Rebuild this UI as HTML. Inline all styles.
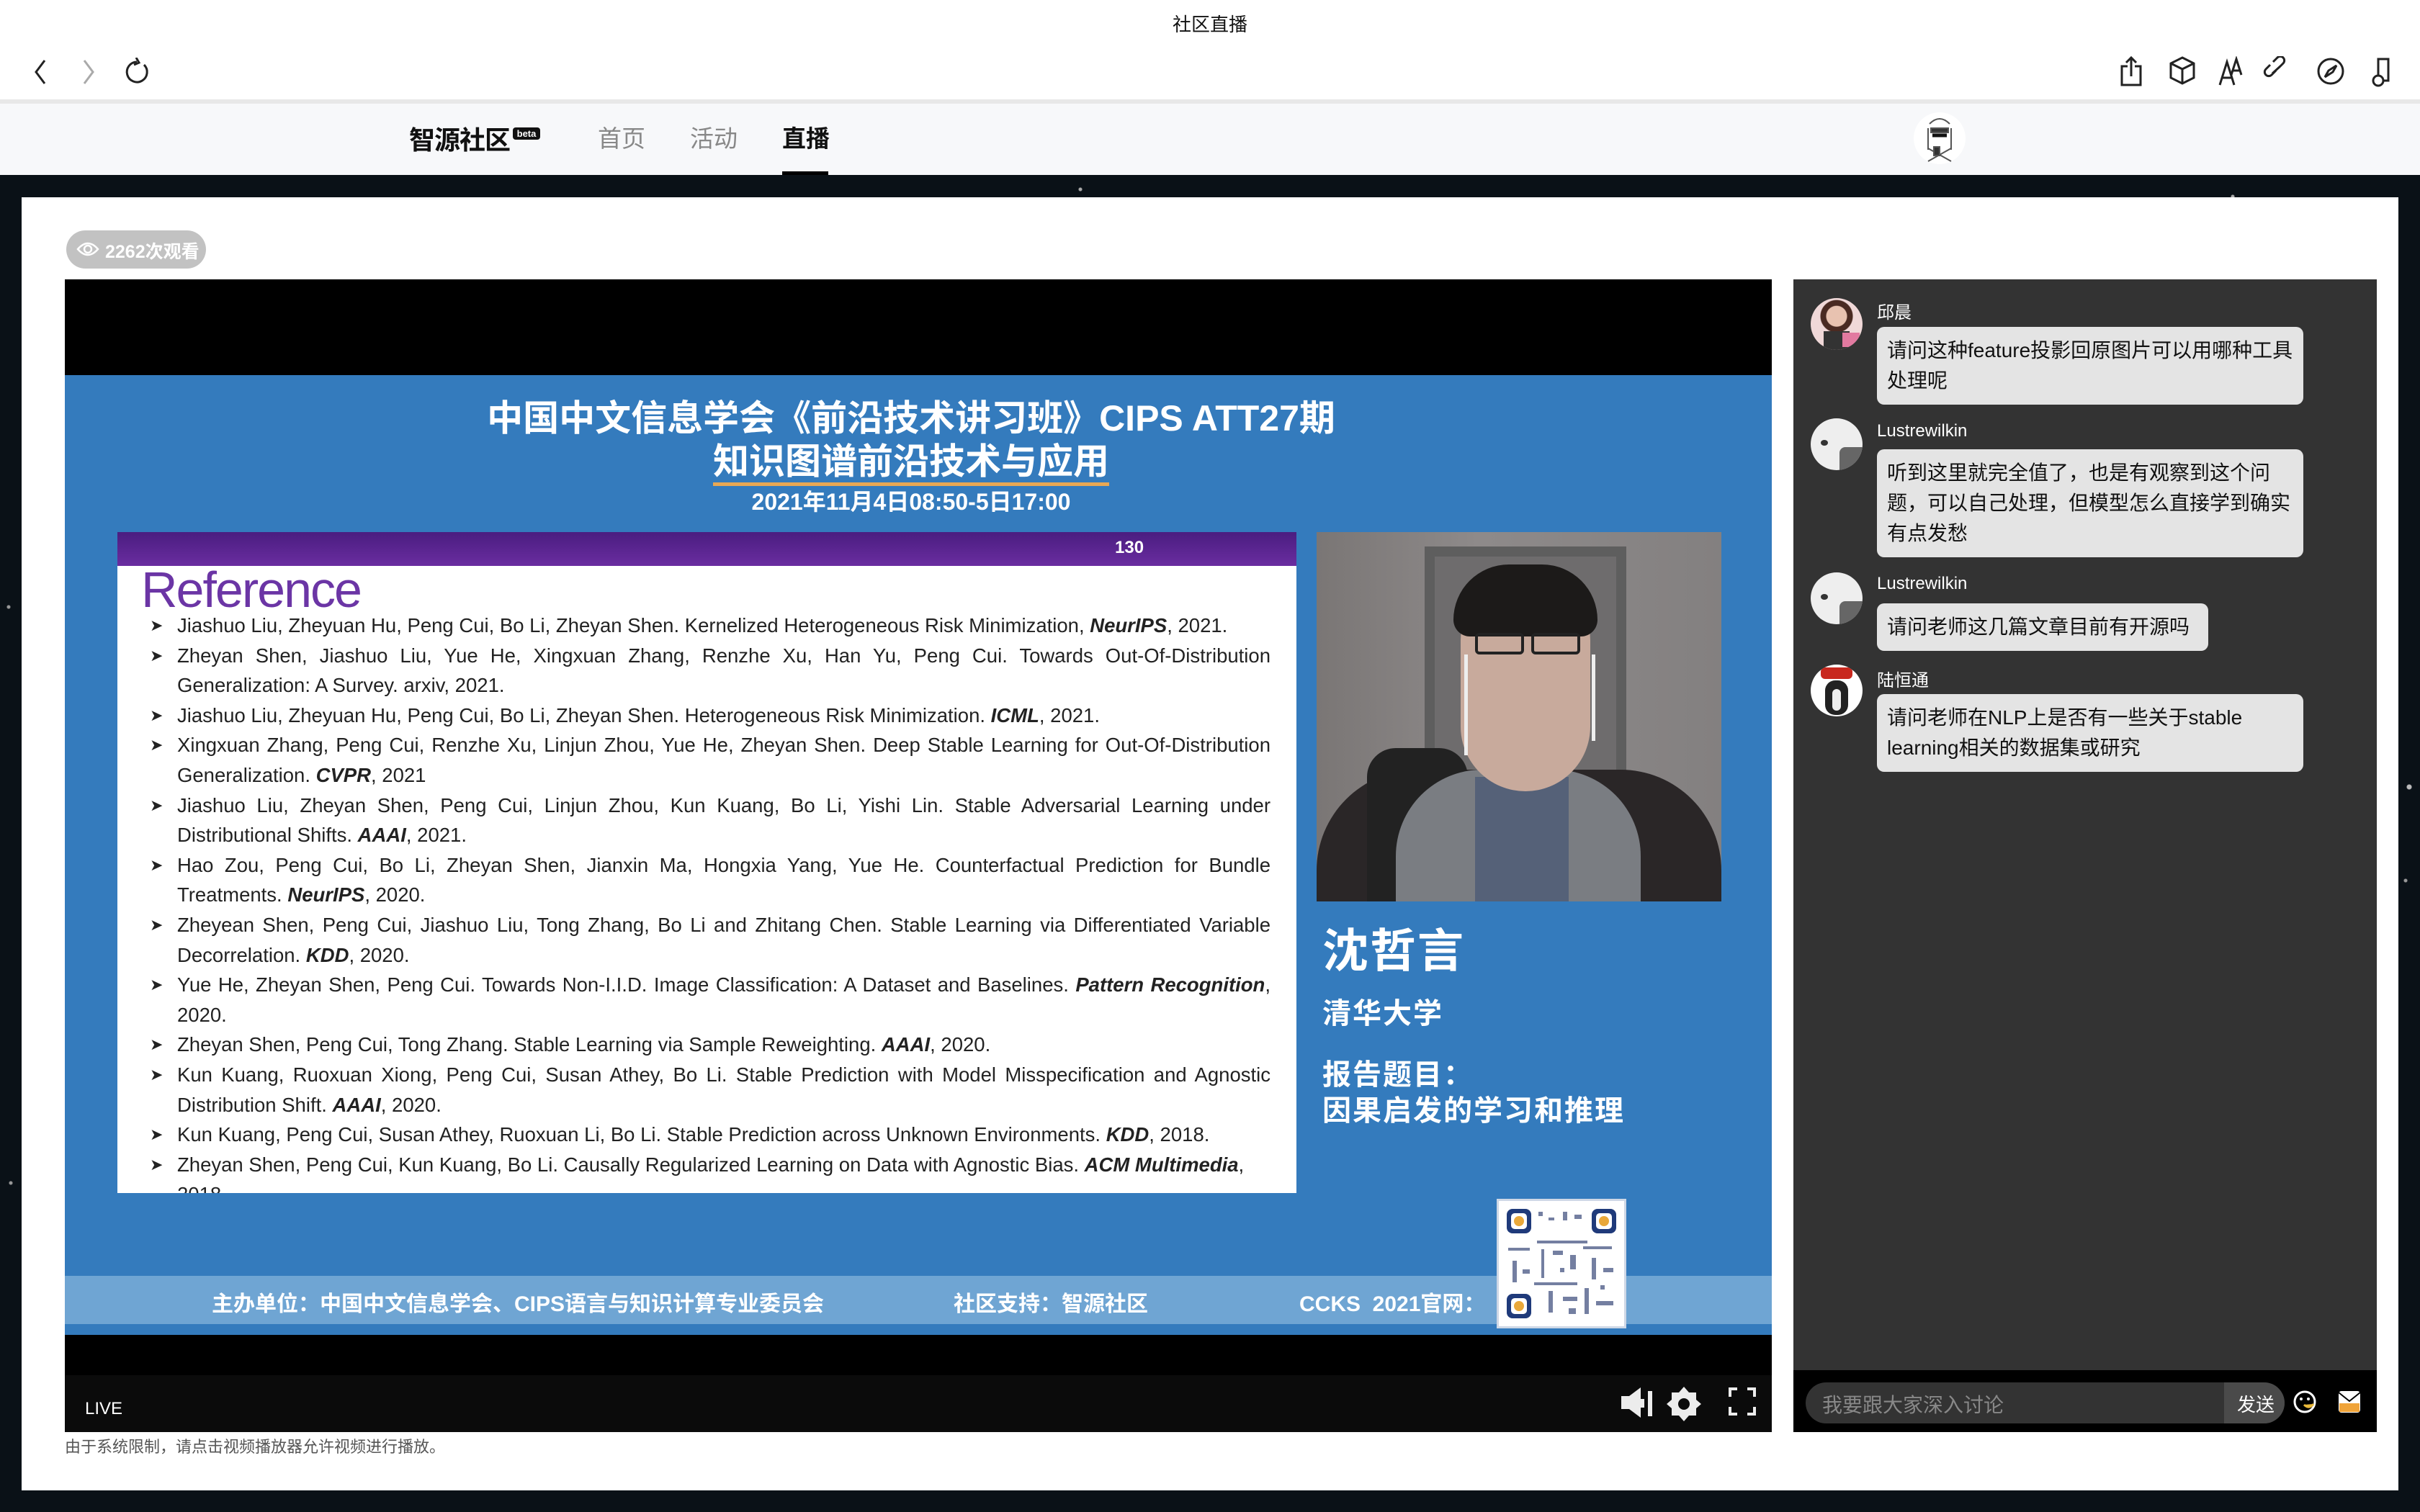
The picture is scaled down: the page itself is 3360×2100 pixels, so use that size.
<!DOCTYPE html>
<html><head><meta charset="utf-8">
<style>
*{margin:0;padding:0;box-sizing:border-box}
body{width:3360px;height:2100px;overflow:hidden;position:relative;font-family:"Liberation Sans","Noto Sans CJK SC",sans-serif;background:#0a1117}
.a{position:absolute}
.stars{position:absolute;left:0;top:243px;width:3360px;height:1857px;background:
radial-gradient(circle at 120px 60px,#aaa 0 2px,transparent 3px),
radial-gradient(circle at 820px 40px,#999 0 2px,transparent 3px),
radial-gradient(circle at 1500px 20px,#aaa 0 2px,transparent 3px),
radial-gradient(circle at 2300px 50px,#999 0 2px,transparent 3px),
radial-gradient(circle at 3100px 30px,#aaa 0 2px,transparent 3px),
radial-gradient(circle at 3345px 850px,#bbb 0 3px,transparent 4px),
radial-gradient(circle at 3340px 980px,#999 0 2px,transparent 3px),
radial-gradient(circle at 12px 600px,#999 0 2px,transparent 3px),
radial-gradient(circle at 15px 1400px,#999 0 2px,transparent 3px),
#0a1117}
.ref{position:absolute;left:208px;width:1556px;font-size:27.5px;color:#222;line-height:41.6px}
.ref>div{position:relative;height:41.6px;overflow:visible}
.ref .j{text-align:justify;text-align-last:justify;white-space:nowrap}
.ref .b{position:absolute;left:0;top:0;font-size:22px}
.ref .t{margin-left:38px;white-space:nowrap}
.ref i{font-weight:bold}
.nm{position:absolute;left:2606px;color:#fff;font-size:24px}
.bb{position:absolute;left:2606px;background:#e4e4e4;border-radius:10px;color:#111;font-size:28px;line-height:42px;padding:12px 14px}
.av{position:absolute;left:2514px;width:72px;height:72px;border-radius:50%;background:#e8e8e8;overflow:hidden}
</style></head><body>
<!-- browser chrome -->
<div class="a" style="left:0;top:0;width:3360px;height:141px;background:#fff;border-bottom:3px solid #e8e8e8"></div>
<div class="a" style="left:0;top:14px;width:3360px;text-align:center;font-size:26px;color:#111">社区直播</div>
<svg class="a" style="left:40px;top:80px" width="170" height="40" viewBox="0 0 170 40" fill="none" stroke-width="3">
<path d="M22 4 L10 20 L22 36" stroke="#222"/><path d="M77 4 L89 20 L77 36" stroke="#aaa"/>
<path d="M160 10 A14 14 0 1 1 150 6" stroke="#222"/><path d="M149 0 L153 7 L146 10" stroke="#222"/>
</svg>
<svg class="a" style="left:2940px;top:78px" width="400" height="44" viewBox="0 0 400 44" fill="none" stroke="#222" stroke-width="3">
<path d="M14 14 H6 V40 H32 V14 H24 M19 2 V28 M12 9 L19 2 L26 9"/>
<path d="M90 2 L106 10 V30 L90 38 L74 30 V10 Z M74 10 L90 18 L106 10 M90 18 V38"/>
<path d="M142 40 L152 8 L162 40 M145 30 H159 M158 26 L165 4 L172 26 M160 20 H170"/>
<path d="M220 20 L214 26 A5 5 0 0 1 206 18 L212 12 M224 16 L230 10 A5 5 0 0 0 222 2 L216 8 M215 24 L226 14"/>
<circle cx="296" cy="21" r="17"/><path d="M304 13 L293 20 L288 29 L299 22 Z"/>
<path d="M362 28 V4 H376 V34 H369"/><circle cx="362" cy="34" r="7"/>
</svg>
<!-- nav -->
<div class="a" style="left:0;top:141px;width:3360px;height:102px;background:#f7f8fa;border-top:3px solid #e8e8e8"></div>
<div class="a" style="left:568px;top:166px;font-size:36px;font-weight:bold;color:#111;letter-spacing:-1px">智源社区</div>
<div class="a" style="left:712px;top:177px;width:38px;height:17px;background:#111;border-radius:4px;color:#fff;font-size:13px;line-height:17px;text-align:center;font-weight:bold">beta</div>
<div class="a" style="left:830px;top:166px;font-size:33px;color:#888">首页</div>
<div class="a" style="left:958px;top:166px;font-size:33px;color:#888">活动</div>
<div class="a" style="left:1086px;top:166px;font-size:33px;color:#111;font-weight:bold">直播</div>
<div class="a" style="left:1086px;top:238px;width:64px;height:5px;background:#000"></div>
<div class="a" style="left:2657px;top:156px;width:72px;height:72px;border-radius:50%;background:#fff"></div>
<svg class="a" style="left:2665px;top:158px" width="56" height="70" viewBox="0 0 56 70" fill="none" stroke="#555" stroke-width="2"><path d="M14 14 Q28 0 42 14 M12 20 V50 M44 20 V50"/><rect x="16" y="20" width="24" height="6" fill="#333"/><path d="M18 30 H38" stroke="#111" stroke-width="5"/><path d="M12 66 L44 48 M44 66 L12 48"/><rect x="20" y="46" width="8" height="12" fill="#333"/></svg>
<div class="stars"></div>
<!-- card -->
<div class="a" style="left:30px;top:274px;width:3300px;height:1796px;background:#fff"></div>
<div class="a" style="left:92px;top:320px;width:194px;height:53px;border-radius:27px;background:#c2c2c2"></div>
<svg class="a" style="left:106px;top:333px" width="32" height="26" viewBox="0 0 32 26" fill="none" stroke="#fff" stroke-width="2.5"><path d="M2 13 Q16 -3 30 13 Q16 29 2 13 Z"/><circle cx="16" cy="13" r="5"/></svg>
<div class="a" style="left:146px;top:330px;font-size:25px;font-weight:bold;color:#fff">2262次观看</div>
<!-- video -->
<div class="a" style="left:90px;top:388px;width:2370px;height:1601px;background:#000"></div>
<div class="a" style="left:90px;top:521px;width:2370px;height:1333px;background:#347bbd"></div>
<div class="a" style="left:90px;top:1772px;width:2370px;height:67px;background:#6fa5d3"></div>
<div class="a" style="left:60px;top:551px;width:2410px;text-align:center;font-size:50px;line-height:60px;font-weight:bold;color:#fff;white-space:nowrap">中国中文信息学会《前沿技术讲习班》CIPS ATT27期</div>
<div class="a" style="left:60px;top:611px;width:2410px;text-align:center;font-size:50px;line-height:60px;font-weight:bold;color:#fff"><span style="border-bottom:5px solid #e8a854;display:inline-block;line-height:58px">知识图谱前沿技术与应用</span></div>
<div class="a" style="left:60px;top:677px;width:2410px;text-align:center;font-size:32px;line-height:40px;font-weight:bold;color:#fff">2021年11月4日08:50-5日17:00</div>
<!-- slide panel -->
<div class="a" style="left:163px;top:739px;width:1637px;height:918px;background:#fff;overflow:hidden">
<div class="a" style="left:0;top:0;width:1637px;height:47px;background:linear-gradient(#4a1d80,#6a2da0)"></div>
<div class="a" style="left:1385px;top:8px;font-size:24px;font-weight:bold;color:#fff">130</div>
<div class="a" style="left:33px;top:40px;font-size:70px;color:#6b35a5;letter-spacing:-2px">Reference</div>
<div class="ref" style="top:109px;left:45px">
<div><span class="b">➤</span><div class="t">Jiashuo Liu, Zheyuan Hu, Peng Cui, Bo Li, Zheyan Shen. Kernelized Heterogeneous Risk Minimization, <i>NeurIPS</i>, 2021.</div></div>
<div><span class="b">➤</span><div class="t j">Zheyan Shen, Jiashuo Liu, Yue He, Xingxuan Zhang, Renzhe Xu, Han Yu, Peng Cui. Towards Out-Of-Distribution</div></div>
<div><div class="t">Generalization: A Survey. arxiv, 2021.</div></div>
<div><span class="b">➤</span><div class="t">Jiashuo Liu, Zheyuan Hu, Peng Cui, Bo Li, Zheyan Shen. Heterogeneous Risk Minimization. <i>ICML</i>, 2021.</div></div>
<div><span class="b">➤</span><div class="t j">Xingxuan Zhang, Peng Cui, Renzhe Xu, Linjun Zhou, Yue He, Zheyan Shen. Deep Stable Learning for Out-Of-Distribution</div></div>
<div><div class="t">Generalization. <i>CVPR</i>, 2021</div></div>
<div><span class="b">➤</span><div class="t j">Jiashuo Liu, Zheyan Shen, Peng Cui, Linjun Zhou, Kun Kuang, Bo Li, Yishi Lin. Stable Adversarial Learning under</div></div>
<div><div class="t">Distributional Shifts. <i>AAAI</i>, 2021.</div></div>
<div><span class="b">➤</span><div class="t j">Hao Zou, Peng Cui, Bo Li, Zheyan Shen, Jianxin Ma, Hongxia Yang, Yue He. Counterfactual Prediction for Bundle</div></div>
<div><div class="t">Treatments. <i>NeurIPS</i>, 2020.</div></div>
<div><span class="b">➤</span><div class="t j">Zheyean Shen, Peng Cui, Jiashuo Liu, Tong Zhang, Bo Li and Zhitang Chen. Stable Learning via Differentiated Variable</div></div>
<div><div class="t">Decorrelation. <i>KDD</i>, 2020.</div></div>
<div><span class="b">➤</span><div class="t j">Yue He, Zheyan Shen, Peng Cui. Towards Non-I.I.D. Image Classification: A Dataset and Baselines. <i>Pattern Recognition</i>,</div></div>
<div><div class="t">2020.</div></div>
<div><span class="b">➤</span><div class="t">Zheyan Shen, Peng Cui, Tong Zhang. Stable Learning via Sample Reweighting. <i>AAAI</i>, 2020.</div></div>
<div><span class="b">➤</span><div class="t j">Kun Kuang, Ruoxuan Xiong, Peng Cui, Susan Athey, Bo Li. Stable Prediction with Model Misspecification and Agnostic</div></div>
<div><div class="t">Distribution Shift. <i>AAAI</i>, 2020.</div></div>
<div><span class="b">➤</span><div class="t">Kun Kuang, Peng Cui, Susan Athey, Ruoxuan Li, Bo Li. Stable Prediction across Unknown Environments. <i>KDD</i>, 2018.</div></div>
<div><span class="b">➤</span><div class="t">Zheyan Shen, Peng Cui, Kun Kuang, Bo Li. Causally Regularized Learning on Data with Agnostic Bias. <i>ACM Multimedia</i>,</div></div>
<div><div class="t">2018.</div></div>
</div>
</div>
<!-- photo -->
<div class="a" style="left:1828px;top:739px;width:562px;height:513px;background:linear-gradient(90deg,#7a7675,#8e8a8a 40%,#838080);overflow:hidden">
<div class="a" style="left:150px;top:20px;width:280px;height:400px;background:#6e6c6d;border:14px solid #5e5e5e"></div>
<div class="a" style="left:0;top:330px;width:562px;height:200px;background:#2a2627;border-radius:140px 140px 0 0"></div>
<div class="a" style="left:70px;top:300px;width:140px;height:230px;background:#222;border-radius:40px 40px 0 0"></div>
<div class="a" style="left:110px;top:330px;width:340px;height:200px;background:#7a7d82;border-radius:120px 120px 0 0"></div>
<div class="a" style="left:220px;top:340px;width:130px;height:190px;background:#556178"></div>
<div class="a" style="left:200px;top:60px;width:180px;height:300px;border-radius:90px;background:#c8aa9c"></div>
<div class="a" style="left:190px;top:45px;width:200px;height:100px;border-radius:100px 100px 30px 30px;background:#1c1a19"></div>
<div class="a" style="left:220px;top:140px;width:68px;height:30px;border:4px solid #222;border-radius:6px"></div>
<div class="a" style="left:298px;top:140px;width:68px;height:30px;border:4px solid #222;border-radius:6px"></div>
<div class="a" style="left:205px;top:170px;width:5px;height:140px;background:#eee"></div>
<div class="a" style="left:382px;top:170px;width:5px;height:120px;background:#eee"></div>
</div>
<div class="a" style="left:1836px;top:1270px;font-size:64px;font-weight:bold;color:#fff;letter-spacing:2px">沈哲言</div>
<div class="a" style="left:1836px;top:1375px;font-size:40px;font-weight:bold;color:#fff;letter-spacing:2px">清华大学</div>
<div class="a" style="left:1836px;top:1468px;font-size:40px;font-weight:bold;color:#fff;letter-spacing:2px;line-height:50px">报告题目：<br>因果启发的学习和推理</div>
<!-- QR -->
<div class="a" style="left:2078px;top:1665px;width:180px;height:180px;background:#fff;border:3px solid #cfd8e6"></div>
<svg class="a" style="left:2090px;top:1677px" width="156" height="156" viewBox="0 0 156 156">
<g fill="#1f3a7a"><rect x="2" y="2" width="34" height="34" rx="8"/><rect x="120" y="2" width="34" height="34" rx="8"/><rect x="2" y="120" width="34" height="34" rx="8"/></g>
<g fill="#fff"><rect x="8" y="8" width="22" height="22" rx="5"/><rect x="126" y="8" width="22" height="22" rx="5"/><rect x="8" y="126" width="22" height="22" rx="5"/></g>
<g fill="#e9a83a"><circle cx="19" cy="19" r="7"/><circle cx="137" cy="19" r="7"/><circle cx="19" cy="137" r="7"/></g>
<g fill="#3a4a7a" opacity=".7"><rect x="46" y="6" width="6" height="6"/><rect x="60" y="14" width="8" height="4"/><rect x="80" y="6" width="6" height="12"/><rect x="96" y="10" width="10" height="6"/><rect x="44" y="46" width="70" height="4"/><rect x="50" y="58" width="4" height="40"/><rect x="66" y="60" width="14" height="6"/><rect x="90" y="66" width="8" height="20"/><rect x="108" y="54" width="40" height="4"/><rect x="120" y="70" width="6" height="30"/><rect x="136" y="84" width="14" height="6"/><rect x="40" y="104" width="60" height="4"/><rect x="60" y="116" width="6" height="30"/><rect x="80" y="124" width="20" height="6"/><rect x="110" y="112" width="6" height="36"/><rect x="126" y="130" width="24" height="6"/><rect x="4" y="56" width="30" height="4"/><rect x="10" y="74" width="6" height="30"/><rect x="24" y="86" width="10" height="6"/><rect x="76" y="84" width="6" height="6"/><rect x="132" y="108" width="6" height="6"/><rect x="88" y="140" width="10" height="8"/></g>
</svg>
<div class="a" style="left:294px;top:1786px;font-size:30px;font-weight:bold;color:#fff">主办单位：中国中文信息学会、CIPS语言与知识计算专业委员会</div>
<div class="a" style="left:1324px;top:1786px;font-size:30px;font-weight:bold;color:#fff">社区支持：智源社区</div>
<div class="a" style="left:1804px;top:1786px;font-size:30px;font-weight:bold;color:#fff">CCKS&nbsp; 2021官网：</div>
<!-- controls -->
<div class="a" style="left:90px;top:1910px;width:2370px;height:79px;background:#0b0b0b"></div>
<div class="a" style="left:118px;top:1943px;font-size:24px;color:#fff">LIVE</div>
<svg class="a" style="left:2248px;top:1924px" width="200" height="50" viewBox="0 0 200 50">
<g fill="#ececec"><path d="M3 15 H14 L30 3 V45 L14 33 H3 Z"/><rect x="30" y="19" width="5" height="12"/><rect x="40" y="8" width="6" height="35"/>
<path d="M90 2 L97 10 L107 10 L107 20 L114 26 L107 32 L107 42 L97 42 L90 50 L83 42 L73 42 L73 32 L66 26 L73 20 L73 10 L83 10 Z"/></g>
<circle cx="90" cy="26" r="8" fill="#0b0b0b"/>
<g fill="none" stroke="#ececec" stroke-width="4"><path d="M154 16 V5 H164 M178 5 H188 V16 M188 30 V40 H178 M164 40 H154 V30"/></g>
</svg>
<div class="a" style="left:90px;top:1992px;font-size:22px;color:#555">由于系统限制，请点击视频播放器允许视频进行播放。</div>
<!-- chat -->
<div class="a" style="left:2490px;top:388px;width:810px;height:1601px;background:#333"></div>
<div class="a" style="left:2490px;top:1903px;width:810px;height:86px;background:#000"></div>
<div class="a" style="left:2507px;top:1920px;width:665px;height:57px;border-radius:29px;background:#333;overflow:hidden"><div class="a" style="right:0;top:0;width:84px;height:57px;background:#4a4a4a"></div></div>
<div class="a" style="left:2530px;top:1930px;font-size:28px;color:#888">我要跟大家深入讨论</div>
<div class="a" style="left:3106px;top:1931px;font-size:26px;color:#fff">发送</div>
<svg class="a" style="left:3182px;top:1928px" width="100" height="42" viewBox="0 0 100 42">
<circle cx="18" cy="19" r="14" fill="none" stroke="#fff" stroke-width="3"/><circle cx="13" cy="15" r="2" fill="#fff"/><circle cx="23" cy="15" r="2" fill="#fff"/><path d="M17 23 Q24 30 30 22" fill="#e9b93a" stroke="#e9b93a" stroke-width="3"/>
<rect x="65" y="4" width="30" height="30" rx="4" fill="#fff"/><path d="M65 6 L80 18 L95 6" fill="none" stroke="#000" stroke-width="2"/><rect x="66" y="21" width="28" height="12" fill="#f0a43a"/>
</svg>
<div class="av" style="top:414px;background:radial-gradient(circle at 50% 35%,#e8c2b0 0 14px,#4a2a22 15px 22px,#f0d8d8 23px)"><div class="a" style="left:18px;top:46px;width:36px;height:26px;background:#333"></div><div class="a" style="left:44px;top:48px;width:24px;height:20px;background:#e27aa0"></div></div>
<div class="nm" style="top:414px">邱晨</div>
<div class="bb" style="top:454px;width:592px">请问这种feature投影回原图片可以用哪种工具处理呢</div>
<div class="av" style="top:581px;background:#eee"><div class="a" style="left:40px;top:40px;width:40px;height:40px;background:#666;border-radius:8px"></div><div class="a" style="left:14px;top:30px;width:10px;height:8px;background:#333;border-radius:50%"></div></div>
<div class="nm" style="top:585px">Lustrewilkin</div>
<div class="bb" style="top:624px;width:592px">听到这里就完全值了，也是有观察到这个问题，可以自己处理，但模型怎么直接学到确实有点发愁</div>
<div class="av" style="top:795px;background:#eee"><div class="a" style="left:40px;top:40px;width:40px;height:40px;background:#666;border-radius:8px"></div><div class="a" style="left:14px;top:30px;width:10px;height:8px;background:#333;border-radius:50%"></div></div>
<div class="nm" style="top:797px">Lustrewilkin</div>
<div class="bb" style="top:838px;width:460px;white-space:nowrap">请问老师这几篇文章目前有开源吗</div>
<div class="av" style="top:923px;background:#fff"><div class="a" style="left:14px;top:4px;width:44px;height:16px;background:#c8281e;border-radius:6px"></div><div class="a" style="left:20px;top:22px;width:32px;height:48px;background:#222;border-radius:14px"></div><div class="a" style="left:30px;top:34px;width:12px;height:30px;background:#eee;border-radius:6px"></div></div>
<div class="nm" style="top:925px">陆恒通</div>
<div class="bb" style="top:964px;width:592px">请问老师在NLP上是否有一些关于stable learning相关的数据集或研究</div>
</body></html>
